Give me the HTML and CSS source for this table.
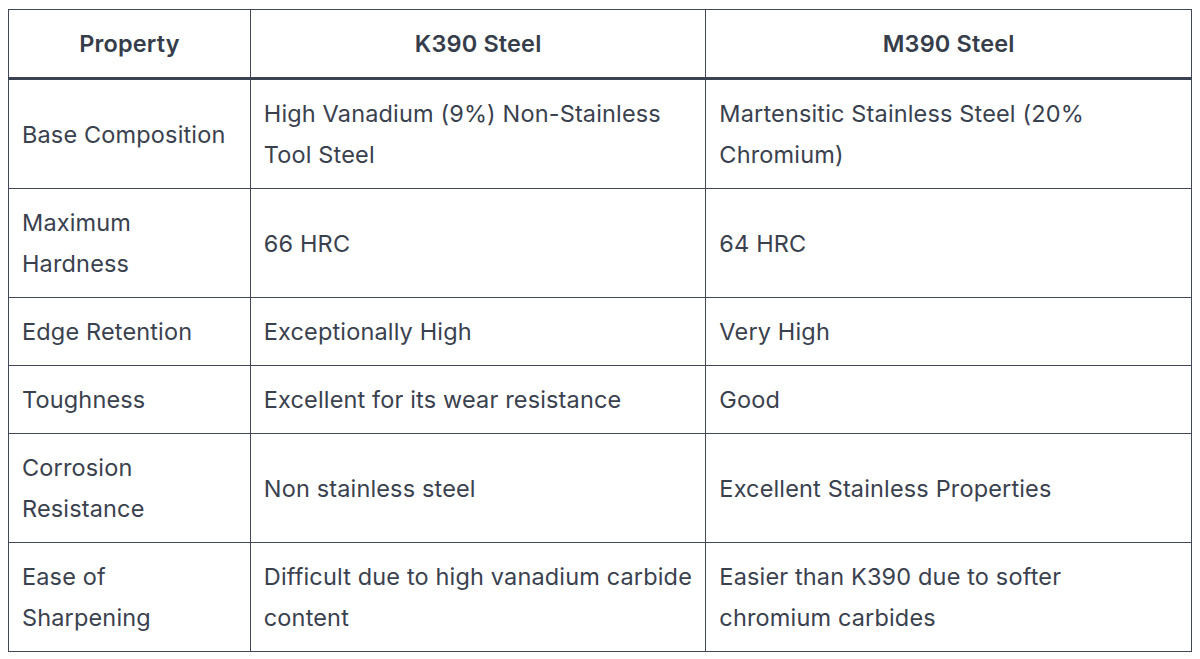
FILE: index.html
```html
<!DOCTYPE html>
<html>
<head>
<meta charset="utf-8">
<link rel="stylesheet" href="styles.css">
</head>
<body>
<table class="cmp">
  <colgroup>
    <col class="c1"><col class="c2"><col class="c3">
  </colgroup>
  <thead>
    <tr><th>Property</th><th>K390 Steel</th><th>M390 Steel</th></tr>
  </thead>
  <tbody>
    <tr><td>Base Composition</td><td>High Vanadium (9%) Non-Stainless Tool Steel</td><td>Martensitic Stainless Steel (20% Chromium)</td></tr>
    <tr><td>Maximum Hardness</td><td>66 HRC</td><td>64 HRC</td></tr>
    <tr><td>Edge Retention</td><td>Exceptionally High</td><td>Very High</td></tr>
    <tr><td>Toughness</td><td>Excellent for its wear resistance</td><td>Good</td></tr>
    <tr><td>Corrosion Resistance</td><td>Non stainless steel</td><td>Excellent Stainless Properties</td></tr>
    <tr><td>Ease of Sharpening</td><td>Difficult due to high vanadium carbide content</td><td>Easier than K390 due to softer chromium carbides</td></tr>
  </tbody>
</table>
</body>
</html>
```
FILE: styles.css
```css
html, body {
  background: #ffffff;
}
body {
  margin: 9px 8px 8px 8px;
  font-family: "Inter", "Noto Sans", sans-serif;
  color: #3a414e;
}
.cmp {
  width: 100%;
  border-collapse: collapse;
  table-layout: fixed;
  font-size: 23.5px;
  line-height: 41px;
  letter-spacing: 0.15px;
}
.c1 { width: 20.44%; }
.c2 { width: 38.51%; }
.c3 { width: 41.05%; }
.cmp th, .cmp td {
  border: 1.5px solid #424857;
  padding: 13px 13px;
  vertical-align: middle;
  text-align: left;
}
.cmp th {
  text-align: center;
  font-weight: 600;
  color: #363d4a;
}
.cmp thead tr th {
  border-bottom: 3px solid #3b4350;
}
```
